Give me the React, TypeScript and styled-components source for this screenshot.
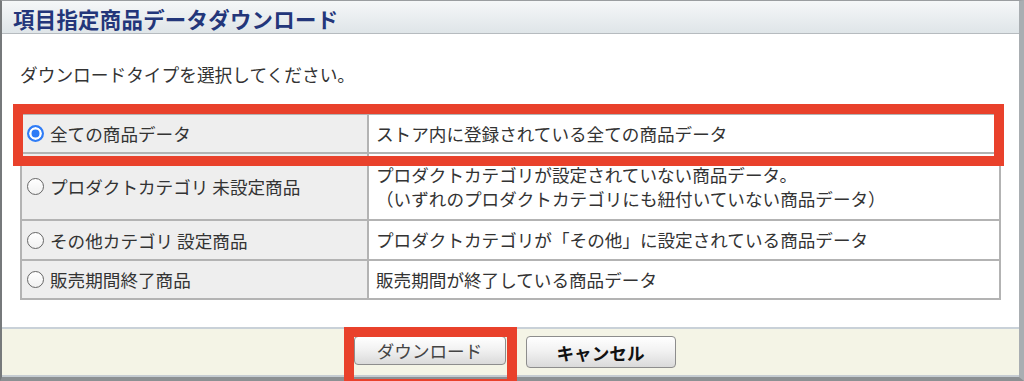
import React, { FC } from "react";
import styled, { createGlobalStyle } from "styled-components";

const GlobalStyle = createGlobalStyle`
  html, body {
    margin: 0;
    padding: 0;
    overflow: hidden;
    background: #8f9396;
  }
  body {
    font-family: "Noto Sans CJK JP", "Noto Sans", sans-serif;
  }
`

const Frame = styled.div`
  box-sizing: border-box;
  width: 1024px;
  height: 381px;
  display: flex;
  flex-direction: column;
  border-top: 1px solid #9a9da0;
  border-left: 2px solid #76797b;
  border-right: 5px solid #a9aeb2;
  border-bottom: 4px solid #8c9093;
  background: #fff;
`

const Header = styled.div`
  flex: none;
  display: flex;
  align-items: center;
  padding: 2px 0 0 11px;
  box-sizing: border-box;
  height: 33px;
  background: linear-gradient(#f5f7f8, #dfe5e8);
  border-bottom: 1px solid #b6bbbf;
`

const Title = styled.h1`
  margin: 0;
  font-size: 21.4px;
  font-weight: 700;
  color: #23367a;
  letter-spacing: 0.3px;
`

const Body = styled.div`
  flex: 1;
  padding: 30px 18px 0 18px;
  background: #fff;
`

const Lead = styled.p`
  margin: 0 0 29px 0;
  font-size: 17.7px;
  line-height: 20px;
  color: #333;
`

const TableWrap = styled.div`
  position: relative;
`

const Highlight = styled.div<{ $top: number; $left: number; $width: number; $height: number }>`
  position: absolute;
  top: ${p => p.$top}px;
  left: ${p => p.$left}px;
  width: ${p => p.$width}px;
  height: ${p => p.$height}px;
  box-sizing: border-box;
  border: 10px solid #e9412b;
  pointer-events: none;
`

const Table = styled.table`
  width: 981px;
  border-collapse: collapse;
  table-layout: fixed;
  font-size: 17.6px;
  color: #333;
`

const Row = styled.tr<{ $h: number }>`
  height: ${p => p.$h}px;
`

const LabelCell = styled.td`
  width: 340px;
  background: #eeeeee;
  border: 2px solid #b3b3b3;
  padding: 0 0 0 5px;
  vertical-align: middle;
`

const DescCell = styled.td`
  background: #fff;
  border: 2px solid #b3b3b3;
  padding: 0 0 0 7px;
  line-height: 24px;
  vertical-align: middle;
`

const Choice = styled.label`
  display: flex;
  align-items: center;
  gap: 6px;
  white-space: pre;
`

const Radio = styled.span<{ $checked?: boolean }>`
  box-sizing: border-box;
  flex: none;
  width: 17px;
  height: 17px;
  border-radius: 50%;
  border: ${p => (p.$checked ? "2px solid #2f7cf6" : "1.5px solid #666")};
  background: ${p => (p.$checked ? "#2f7cf6" : "linear-gradient(#ffffff, #f1f1f1)")};
  box-shadow: ${p => (p.$checked ? "inset 0 0 0 2.5px #fff" : "none")};
`

const Footer = styled.div`
  flex: none;
  height: 46px;
  display: flex;
  align-items: center;
  justify-content: center;
  gap: 20px;
  padding-left: 8px;
  background: #f4f4e6;
  border-top: 2px solid #c9d1d8;
  border-bottom: 2px solid #c5ccd2;
`

const ButtonSlot = styled.div`
  position: relative;
`

const Button = styled.button<{ $strong?: boolean }>`
  width: ${p => (p.$strong ? 150 : 152)}px;
  height: ${p => (p.$strong ? 32 : 29)}px;
  margin-top: ${p => (p.$strong ? 0 : -3)}px;
  border: 1px solid #8d8d8d;
  border-radius: 4px;
  background: linear-gradient(#ffffff, #f2f2f2 45%, #dadada);
  font-family: "Noto Sans CJK JP", sans-serif;
  font-size: 17.6px;
  font-weight: ${p => (p.$strong ? 700 : 400)};
  color: ${p => (p.$strong ? "#111" : "#444")};
  padding: 0;
  cursor: pointer;
`

type Option = { label: string; desc: string[]; checked?: boolean; h: number };

const options: Option[] = [
  { label: "全ての商品データ", desc: ["ストア内に登録されている全ての商品データ"], checked: true, h: 39 },
  {
    label: "プロダクトカテゴリ 未設定商品",
    desc: ["プロダクトカテゴリが設定されていない商品データ。", "（いずれのプロダクトカテゴリにも紐付いていない商品データ）"],
    h: 67,
  },
  { label: "その他カテゴリ 設定商品", desc: ["プロダクトカテゴリが「その他」に設定されている商品データ"], h: 40 },
  { label: "販売期間終了商品", desc: ["販売期間が終了している商品データ"], h: 39 },
];

const App: FC = () => {
  return (
    <React.Fragment>
      <GlobalStyle />
      <Frame>
        <Header>
          <Title>項目指定商品データダウンロード</Title>
        </Header>
        <Body>
          <Lead>ダウンロードタイプを選択してください。</Lead>
          <TableWrap>
            <Table>
              <tbody>
                {options.map(o => (
                  <Row key={o.label} $h={o.h}>
                    <LabelCell>
                      <Choice>
                        <Radio $checked={o.checked} />
                        {o.label}
                      </Choice>
                    </LabelCell>
                    <DescCell>
                      {o.desc.map(line => (
                        <div key={line}>{line}</div>
                      ))}
                    </DescCell>
                  </Row>
                ))}
              </tbody>
            </Table>
            <Highlight $top={-9} $left={-7} $width={991} $height={62} />
          </TableWrap>
        </Body>
        <Footer>
          <ButtonSlot>
            <Button>ダウンロード</Button>
            <Highlight $top={-12} $left={-10} $width={173} $height={62} />
          </ButtonSlot>
          <Button $strong>キャンセル</Button>
        </Footer>
      </Frame>
    </React.Fragment>
  );
};

export default App;
